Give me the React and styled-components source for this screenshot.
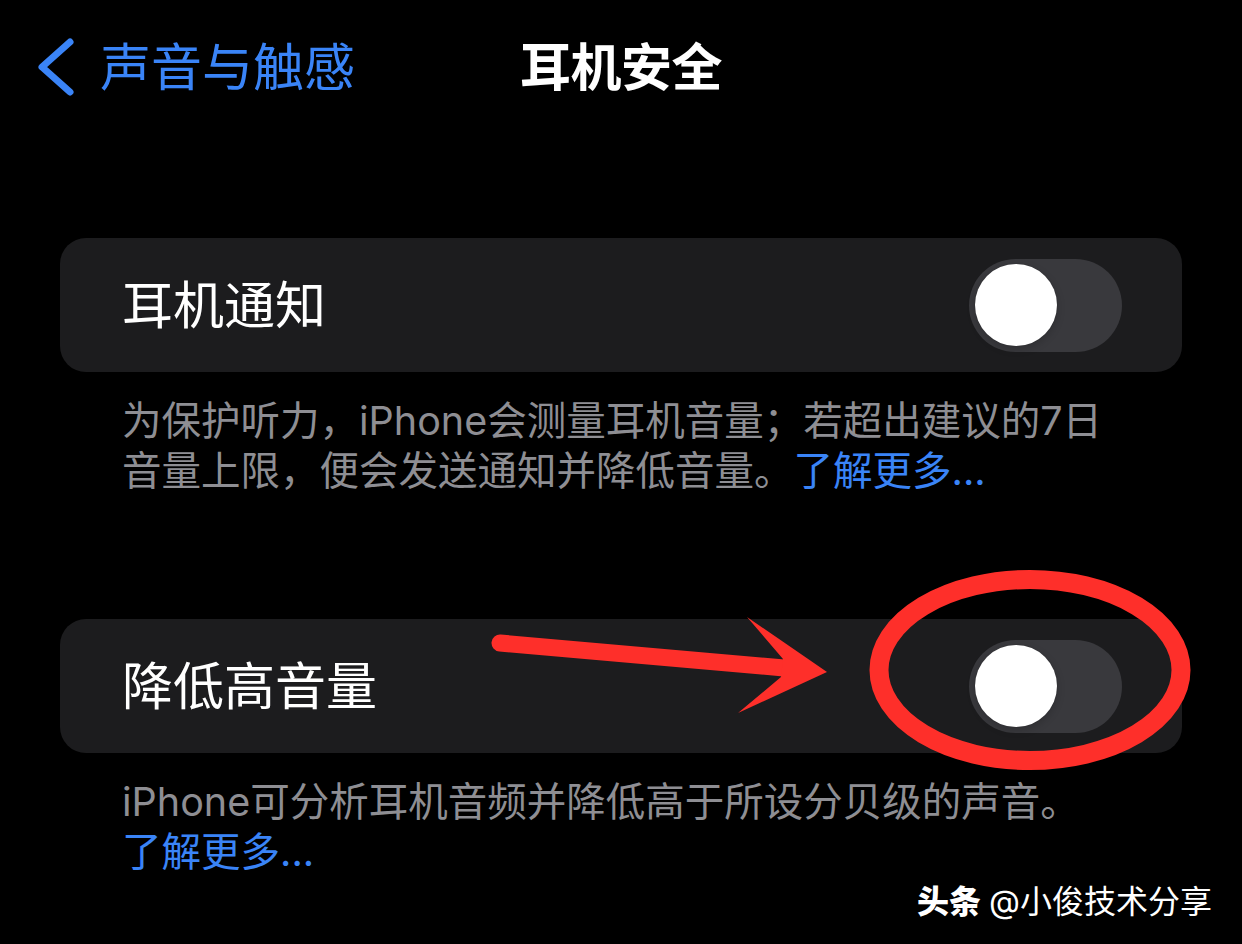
import styled, { createGlobalStyle } from "styled-components";

const GlobalStyle = createGlobalStyle`
  body {
    margin: 0;
    background: #000;
    font-family: "Inter", "Noto Sans CJK SC", sans-serif;
  }
`;

const Page = styled.div`
  position: relative;
  width: 1242px;
  min-height: 944px;
  background: #000;
  color: #fff;
  overflow: hidden;
`;

const NavBar = styled.header`
  display: grid;
  grid-template-columns: 1fr auto 1fr;
  align-items: center;
  height: 134px;
`;

const BackButton = styled.div`
  display: flex;
  align-items: center;
  gap: 24px;
  padding-left: 36px;
  color: #3a84f7;
  font-size: 51px;
  line-height: 1;
`;

const Title = styled.h1`
  margin: 0;
  font-size: 51px;
  font-weight: 600;
  line-height: 1;
  letter-spacing: -0.5px;
`;

const Section = styled.section`
  margin-top: ${(p) => p.$top}px;
`;

const Card = styled.div`
  margin: 0 60px;
  height: 134px;
  padding: 0 60px 0 62px;
  display: flex;
  align-items: center;
  justify-content: space-between;
  background: #1c1c1e;
  border-radius: 26px;
`;

const RowLabel = styled.span`
  font-size: 51px;
  line-height: 1;
  color: #fff;
`;

const Track = styled.div`
  box-sizing: border-box;
  width: 153px;
  height: 93px;
  padding: 6px;
  border-radius: 47px;
  background: #39393d;
  display: flex;
  align-items: center;
`;

const Knob = styled.div`
  width: 82px;
  height: 82px;
  border-radius: 50%;
  background: #fff;
  box-shadow: 0 3px 8px rgba(0, 0, 0, 0.18), 0 0 0 1px rgba(0, 0, 0, 0.04);
`;

const Footer = styled.p`
  margin: 24px 0 0;
  padding: 0 60px 0 122px;
  font-size: 39.5px;
  line-height: 50px;
  color: #8e8e93;
  white-space: nowrap;
`;

const LearnMore = styled.span`
  color: #3a84f7;
`;

const Watermark = styled.div`
  display: flex;
  justify-content: flex-end;
  align-items: center;
  gap: 8px;
  margin-top: 2px;
  padding-right: 30px;
  height: 40px;
  font-size: 32px;
  color: #fff;
  text-shadow: 0 0 2px rgba(0, 0, 0, 0.8);
`;

const Brand = styled.span`
  font-weight: 900;
`;

const Annotation = styled.svg`
  position: absolute;
  left: 0;
  top: 0;
  pointer-events: none;
`;

function Switch() {
  return (
    <Track>
      <Knob />
    </Track>
  );
}

export default function App() {
  return (
    <Page>
      <GlobalStyle />
      <NavBar>
        <BackButton>
          <svg width="40" height="60" viewBox="0 0 40 60">
            <polyline
              points="34,5 6,30 34,55"
              fill="none"
              stroke="#3a84f7"
              strokeWidth="7"
              strokeLinecap="round"
              strokeLinejoin="round"
            />
          </svg>
          <span>声音与触感</span>
        </BackButton>
        <Title>耳机安全</Title>
        <div />
      </NavBar>

      <Section $top={104}>
        <Card>
          <RowLabel>耳机通知</RowLabel>
          <Switch />
        </Card>
        <Footer>
          为保护听力，iPhone会测量耳机音量；若超出建议的7日
          <br />
          音量上限，便会发送通知并降低音量。<LearnMore>了解更多...</LearnMore>
        </Footer>
      </Section>

      <Section $top={123}>
        <Card>
          <RowLabel>降低高音量</RowLabel>
          <Switch />
        </Card>
        <Footer>
          iPhone可分析耳机音频并降低高于所设分贝级的声音。
          <br />
          <LearnMore>了解更多...</LearnMore>
        </Footer>
      </Section>

      <Watermark>
        <Brand>头条</Brand>
        <span>@小俊技术分享</span>
      </Watermark>

      <Annotation width="1242" height="944" viewBox="0 0 1242 944">
        <line
          x1="500"
          y1="643"
          x2="784"
          y2="668"
          stroke="#fe2f2a"
          strokeWidth="17"
          strokeLinecap="round"
        />
        <polygon points="747,617 827,672 738,713 781,677 783,659" fill="#fe2f2a" />
        <ellipse
          cx="1030"
          cy="670"
          rx="151"
          ry="90.5"
          fill="none"
          stroke="#fe2f2a"
          strokeWidth="19"
        />
      </Annotation>
    </Page>
  );
}
